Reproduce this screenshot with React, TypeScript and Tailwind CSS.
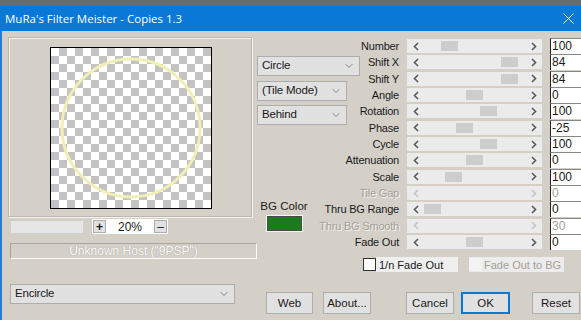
import React from 'react';
import { ChevronDown } from 'lucide-react';

type Row = { label: string; value: string; thumb?: number; disabled?: boolean };

const rows: Row[] = [
  { label: 'Number', value: '100', thumb: 17 },
  { label: 'Shift X', value: '84', thumb: 77 },
  { label: 'Shift Y', value: '84', thumb: 77 },
  { label: 'Angle', value: '0', thumb: 42 },
  { label: 'Rotation', value: '100', thumb: 56 },
  { label: 'Phase', value: '-25', thumb: 32 },
  { label: 'Cycle', value: '100', thumb: 56 },
  { label: 'Attenuation', value: '0', thumb: 42 },
  { label: 'Scale', value: '100', thumb: 21 },
  { label: 'Tile Gap', value: '0', disabled: true },
  { label: 'Thru BG Range', value: '0', thumb: 0 },
  { label: 'Thru BG Smooth', value: '30', disabled: true },
  { label: 'Fade Out', value: '0', thumb: 42 },
];

function Arrow({ dir, disabled }: { dir: 'l' | 'r'; disabled?: boolean }) {
  return (
    <svg width="6" height="9" viewBox="0 0 6 9" className="shrink-0">
      <path
        d={dir === 'l' ? 'M5 1 L1.5 4.5 L5 8' : 'M1 1 L4.5 4.5 L1 8'}
        fill="none"
        stroke={disabled ? '#c4c4c4' : '#5a5a5a'}
        strokeWidth="1.6"
      />
    </svg>
  );
}

function ScrollBar({ thumb, disabled }: { thumb?: number; disabled?: boolean }) {
  return (
    <div className="flex items-center w-[135px] h-[14px] bg-[#ebebeb]">
      <div className="w-[17px] flex justify-center">
        <Arrow dir="l" disabled={disabled} />
      </div>
      <div className="flex-1 h-[10px] flex">
        {!disabled && <div className="w-[17px] h-full bg-[#cdcdcd]" style={{ marginLeft: thumb }} />}
      </div>
      <div className="w-[17px] flex justify-center">
        <Arrow dir="r" disabled={disabled} />
      </div>
    </div>
  );
}

function Combo({ label, w }: { label: string; w: string }) {
  return (
    <div className={`${w} h-[20px] flex items-center justify-between bg-[#e1e1e1] border border-[#adadad] pl-[4px] pr-[4px] text-[11.5px] tracking-[-0.2px] text-[#1a1a1a]`}>
      <span>{label}</span>
      <ChevronDown size={12} strokeWidth={1.3} className="text-[#555]" />
    </div>
  );
}

function Btn({ label, w, primary }: { label: string; w: string; primary?: boolean }) {
  return (
    <div
      className={`${w} h-[22px] flex items-center justify-center bg-[#e1e1e1] text-[11.5px] text-[#1a1a1a] ${
        primary ? 'border-2 border-[#0078d7]' : 'border border-[#adadad]'
      }`}
    >
      {label}
    </div>
  );
}

export default function App() {
  return (
    <div className="w-[581px] h-[320px] overflow-hidden flex flex-col bg-[#d4d0c8] font-['Liberation_Sans',Arial,sans-serif] text-[11px] text-[#1a1a1a] select-none">
      <div className="h-[6px] bg-[#6b6b6b]" />
      <div className="h-[25px] bg-[#0a78d7] flex items-center justify-between pl-[5px] pr-[7px]">
        <span className="font-['Open_Sans',sans-serif] text-[11.5px] text-white">MuRa's Filter Meister - Copies 1.3</span>
        <svg width="11" height="11" viewBox="0 0 11 11">
          <path d="M0.5 0.5 L10.5 10.5 M10.5 0.5 L0.5 10.5" stroke="#fff" strokeWidth="1" />
        </svg>
      </div>

      <div className="flex-1 flex border-l-2 border-[#2b7bd1]">
        {/* left column */}
        <div className="w-[255px] flex flex-col">
          <div className="ml-[6px] mt-[6px] w-[244px] h-[180px] border border-[#bcb8b0] shadow-[1px_1px_0_#f4f3ef,inset_1px_1px_0_#f4f3ef]">
            <div className="ml-[41px] mt-[9px] w-[162px] h-[162px] border border-black bg-[conic-gradient(#c3c3c3_25%,#ffffff_0_50%,#c3c3c3_0_75%,#ffffff_0)] bg-[length:16px_16px]">
              <svg width="160" height="160" viewBox="0 0 160 160">
                <circle cx="80" cy="80" r="69" fill="none" stroke="#f2efb4" strokeWidth="3" />
              </svg>
            </div>
          </div>

          <div className="flex items-center mt-[2px] ml-[8px] gap-[8px]">
            <div className="w-[74px] h-[14px] bg-[#e6e6e6] border border-[#d2d0cb]" />
            <div className="w-[76px] h-[15px] bg-white flex items-center justify-between px-[1px]">
              <div className="w-[13px] h-[13px] bg-[#e1e1e1] border border-[#adadad] flex items-center justify-center text-[12px] font-bold leading-none">+</div>
              <span className="text-[12px]">20%</span>
              <div className="w-[13px] h-[13px] bg-[#e1e1e1] border border-[#adadad] flex items-center justify-center text-[12px] leading-none">–</div>
            </div>
          </div>

          <div className="ml-[8px] mt-[9px] w-[247px] h-[16px] border border-[#a9a59d] border-r-white border-b-white flex items-center justify-center text-[12px] text-white [text-shadow:0_0_1px_#8f8b84]">
            Unknown Host ("9PSP")
          </div>

          <div className="ml-[8px] mt-[25px]">
            <Combo label="Encircle" w="w-[225px]" />
          </div>
        </div>

        {/* right area */}
        <div className="flex-1 flex flex-col pt-[7px]">
          <div className="grid">
            <div className="col-start-1 row-start-1 flex flex-col">
              {rows.map((r) => (
                <div key={r.label} className="h-[16.33px] flex items-center">
                  <div
                    className={`w-[143px] text-right pr-[1px] tracking-[-0.2px] ${
                      r.disabled ? 'text-[#a3a09a] [text-shadow:1px_1px_0_#f4f3ef]' : ''
                    }`}
                  >
                    {r.label}
                  </div>
                  <div className="ml-[7px]">
                    <ScrollBar thumb={r.thumb} disabled={r.disabled} />
                  </div>
                  <div
                    className={`ml-[8px] w-[31px] h-[16px] bg-white border-l border-l-[#222] border-t border-t-[#888] pl-[1px] text-[12px] leading-[15px] ${
                      r.disabled ? 'text-[#a0a0a0]' : ''
                    }`}
                  >
                    {r.value}
                  </div>
                </div>
              ))}
            </div>

            <div className="col-start-1 row-start-1 flex flex-col self-start w-[104px]">
              <div className="mt-[18px]">
                <Combo label="Circle" w="w-[103px]" />
              </div>
              <div className="mt-[5px]">
                <Combo label="(Tile Mode)" w="w-[90px]" />
              </div>
              <div className="mt-[4px]">
                <Combo label="Behind" w="w-[90px]" />
              </div>
              <div className="mt-[74px] w-[54px] flex flex-col items-center">
                <span className="text-[11.5px] leading-[14px]">BG Color</span>
                <div className="mt-[3px] w-[35px] h-[15px] bg-[#1e7a1e] border border-[#4a4a4a] shadow-[0_0_0_1px_#f6f5f1]" />
              </div>
            </div>
          </div>

          <div className="mt-[7px] flex items-center">
            <div className="ml-[106px] w-[13px] h-[13px] bg-white border border-[#333]" />
            <div className="w-[82px] h-[15px] bg-[#efefef] pl-[3px] flex items-center">1/n Fade Out</div>
            <div className="ml-[11px] w-[95px] h-[15px] bg-[#ececec] flex items-center">
              <div className="w-[13px] h-[13px] bg-[#f4f4f4]" />
              <span className="ml-[2px] text-[#a3a09a]">Fade Out to BG</span>
            </div>
          </div>

          <div className="mt-[20px] flex items-center">
            <div className="ml-[9px]"><Btn label="Web" w="w-[47px]" /></div>
            <div className="ml-[10px]"><Btn label="About..." w="w-[48px]" /></div>
            <div className="ml-[35px]"><Btn label="Cancel" w="w-[48px]" /></div>
            <div className="ml-[7px]"><Btn label="OK" w="w-[49px]" primary /></div>
            <div className="ml-[22px]"><Btn label="Reset" w="w-[48px]" /></div>
          </div>
        </div>
      </div>
    </div>
  );
}
